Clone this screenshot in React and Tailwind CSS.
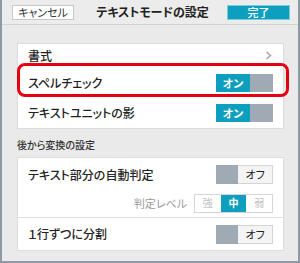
import React from "react";

const font = { fontFamily: '"Noto Sans CJK JP", "Noto Sans", sans-serif' };

function ToggleOn() {
  return (
    <div className="flex h-[18px] w-[57px]">
      <div className="flex w-[34px] items-center justify-center bg-[#0e9fbf] text-[11px] font-bold leading-none text-white">オン</div>
      <div className="w-[23px] bg-[#a0aab4]" />
    </div>
  );
}

function ToggleOff() {
  return (
    <div className="flex h-[19px] w-[57px]">
      <div className="w-[22px] bg-[#a0aab4]" />
      <div className="flex w-[35px] items-center justify-center border border-l-0 border-[#d4d4d4] bg-[#f4f4f4] text-[11px] leading-none text-[#222]">オフ</div>
    </div>
  );
}

export default function App() {
  return (
    <div style={font} className="relative h-[263px] w-[300px] border-x-2 border-b-2 border-[#8d99a5] bg-[#eaeaea] text-[#222] [font-feature-settings:'palt']">
      {/* header */}
      <div className="flex h-[25px] items-center justify-between border-b border-[#d2d2d2] bg-[#ececec] pl-[10px] pr-[8px]">
        <div className="flex h-[15px] w-[62px] items-center justify-center border border-[#c8c8c8] bg-white text-[11px] leading-none text-[#333]">キャンセル</div>
        <div className="ml-[4px] text-[12px] font-bold leading-none text-[#222]">テキストモードの設定</div>
        <div className="flex h-[15px] w-[63px] items-center justify-center border border-[#7ccbdc] bg-[#0e9fbf] text-[11px] font-medium leading-none text-white">完了</div>
      </div>

      {/* card 1 */}
      <div className="ml-[15px] mt-[18px] w-[267px] border border-[#dcdcdc] bg-white">
        <div className="flex h-[24px] items-center justify-between pl-[10px] pr-[11px]">
          <span className="text-[12px] font-medium leading-none">書式</span>
          <svg width="7" height="9" viewBox="0 0 7 9" className="mt-[-2px]">
            <path d="M1.5 1 L5.5 4.5 L1.5 8" fill="none" stroke="#a8a8a8" strokeWidth="1.6" />
          </svg>
        </div>
        <div className="flex h-[30px] items-center justify-between pl-[10px] pr-[10px]">
          <span className="text-[12px] font-medium leading-none">スペルチェック</span>
          <ToggleOn />
        </div>
        <div className="flex h-[30px] items-center justify-between pl-[10px] pr-[10px]">
          <span className="text-[12px] font-medium leading-none">テキストユニットの影</span>
          <ToggleOn />
        </div>
      </div>

      <div className="ml-[15px] mt-[11px] text-[10px] font-medium leading-none text-[#333]">後から変換の設定</div>

      {/* card 2 */}
      <div className="ml-[15px] mt-[7px] w-[267px] border border-[#dcdcdc] bg-white">
        <div className="flex h-[33px] items-center justify-between pl-[10px] pr-[10px]">
          <span className="text-[12px] font-medium leading-none">テキスト部分の自動判定</span>
          <ToggleOff />
        </div>
        <div className="flex h-[26px] items-center justify-end gap-[7px] pr-[10px] pb-[2px]">
          <span className="text-[11px] leading-none text-[#9a9a9a]">判定レベル</span>
          <div className="flex h-[19px] w-[79px] border border-[#d6d6d6] text-[10px] leading-none">
            <div className="flex flex-1 items-center justify-center text-[#c0c0c0]">強</div>
            <div className="flex flex-1 items-center justify-center bg-[#0e9fbf] font-bold text-white">中</div>
            <div className="flex flex-1 items-center justify-center text-[#c0c0c0]">弱</div>
          </div>
        </div>
        <div className="flex h-[33px] items-center justify-between border-t border-[#e0e0e0] pl-[10px] pr-[10px]">
          <span className="text-[12px] font-medium leading-none">１行ずつに分割</span>
          <ToggleOff />
        </div>
      </div>

      {/* red highlight */}
      <div className="absolute left-[15px] top-[63px] h-[34px] w-[272px] rounded-[8px] border-[3px] border-[#e60012]" />
    </div>
  );
}
